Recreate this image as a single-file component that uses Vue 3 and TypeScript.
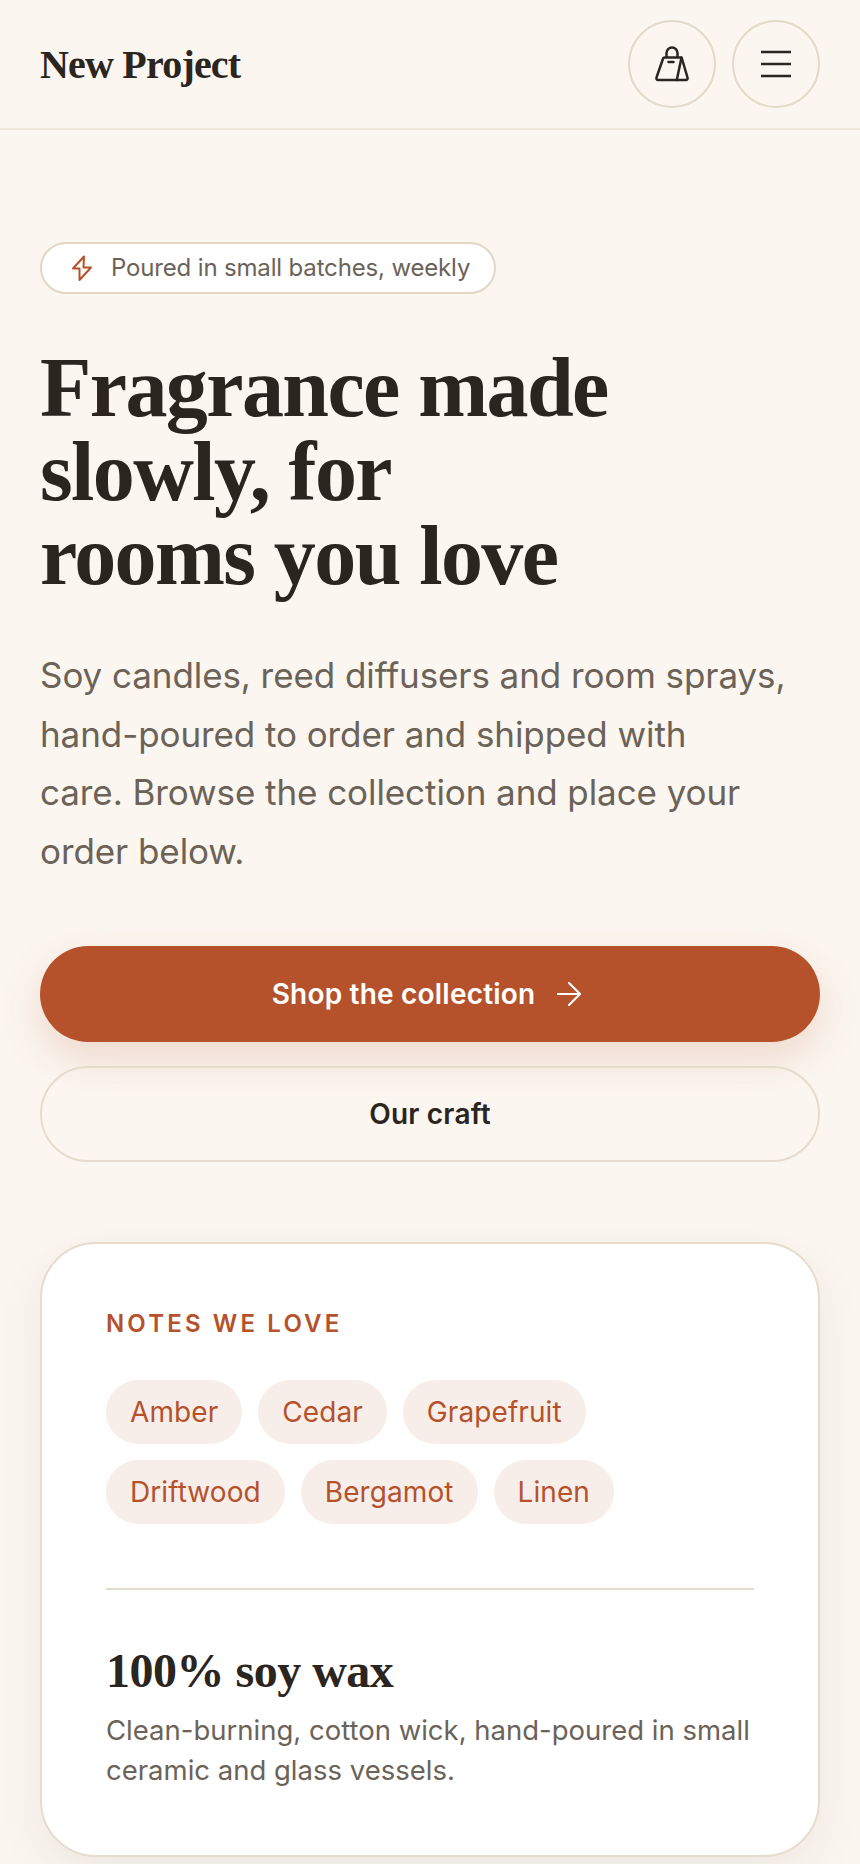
<template>
  <div class="page">
    <header class="topbar">
      <span class="brand">New Project</span>
      <div class="actions">
        <button class="round" aria-label="Bag">
          <svg width="36" height="36" viewBox="0 0 36 36" fill="none" stroke="#2b2520" stroke-width="2.500" stroke-linecap="round" stroke-linejoin="round">
            <path d="M12.500 11V7a5.500 5.500 0 0 1 11 0v4" />
            <path d="M10.500 11.500h16a1.500 1.500 0 0 1 1.400 1l5.600 19a1.800 1.800 0 0 1-1.700 2.500H4.200a1.800 1.800 0 0 1-1.700-2.500l6.600-19a1.500 1.500 0 0 1 1.400-1z" />
            <path d="M27.500 11.500 22.800 34" />
            <path d="M14.500 16h5" />
          </svg>
        </button>
        <button class="round" aria-label="Menu">
          <svg width="36" height="36" viewBox="0 0 36 36" fill="none" stroke="#2b2520" stroke-width="2.400">
            <path d="M3 6h30M3 18h30M3 30h30" />
          </svg>
        </button>
      </div>
    </header>

    <main class="hero">
      <div class="pill">
        <svg width="28" height="28" viewBox="0 0 28 28" fill="none" stroke="#b5522b" stroke-width="2" stroke-linecap="round" stroke-linejoin="round">
          <path d="M16 2.500 5 14.500h6.500L11.500 26 23 13.500h-7.500z" />
        </svg>
        <span>Poured in small batches, weekly</span>
      </div>

      <h1>Fragrance made<br />slowly, for<br />rooms you love</h1>

      <p class="lede">
        Soy candles, reed diffusers and room sprays,<br />hand-poured to order and shipped with<br />care. Browse the collection and place your<br />order below.
      </p>

      <div class="cta">
        <a class="btn primary">
          Shop the collection
          <svg width="38" height="38" viewBox="0 0 24 24" fill="none" stroke="#fff" stroke-width="1.350" stroke-linecap="round" stroke-linejoin="round">
            <path d="M5 12h14M12 5l7 7-7 7" />
          </svg>
        </a>
        <a class="btn ghost">Our craft</a>
      </div>

      <section class="card">
        <div class="eyebrow">NOTES WE LOVE</div>
        <div class="chips">
          <span v-for="n in notes" :key="n" class="chip">{{ n }}</span>
        </div>
        <hr />
        <h2>100% soy wax</h2>
        <p class="blurb">Clean-burning, cotton wick, hand-poured in small ceramic and glass vessels.</p>
      </section>
    </main>
  </div>
</template>

<script setup lang="ts">
const notes: string[] = ['Amber', 'Cedar', 'Grapefruit', 'Driftwood', 'Bergamot', 'Linen']
</script>

<style>
body {
  margin: 0;
  background: #fbf6f0;
}
</style>

<style scoped>
.page {
  height: 1864px;
  overflow: hidden;
  background: #fbf6f0;
  color: #2b2520;
  font-family: "Inter", "Noto Sans", sans-serif;
}
.topbar {
  height: 128px;
  padding: 0 40px;
  display: flex;
  align-items: center;
  justify-content: space-between;
  border-bottom: 2px solid #efe7dc;
}
.brand {
  font-family: "Liberation Serif", serif;
  font-weight: 700;
  font-size: 40px;
  letter-spacing: -0.8px;
}
.actions {
  display: flex;
  gap: 16px;
}
.round {
  width: 88px;
  height: 88px;
  padding: 0;
  border-radius: 50%;
  border: 2px solid #e3d9c9;
  background: transparent;
  display: flex;
  align-items: center;
  justify-content: center;
}
.hero {
  padding: 112px 40px 0;
}
.pill {
  display: inline-flex;
  align-items: center;
  gap: 15px;
  height: 52px;
  box-sizing: border-box;
  padding: 0 24px 0 26px;
  border: 2px solid #e0d7c7;
  border-radius: 26px;
  background: #fff;
  color: #6b6258;
  font-size: 24px;
  line-height: 46px;
  letter-spacing: -0.16px;
}
h1 {
  margin: 52px 0 0;
  font-family: "Liberation Serif", serif;
  font-weight: 700;
  font-size: 84px;
  line-height: 84px;
  letter-spacing: -1.600px;
}
.lede {
  margin: 48px 0 0;
  font-size: 35px;
  line-height: 58.500px;
  letter-spacing: -0.08px;
  color: #6b6258;
}
.cta {
  margin-top: 66px;
  display: flex;
  flex-direction: column;
  gap: 24px;
}
.btn {
  height: 96px;
  box-sizing: border-box;
  border-radius: 48px;
  display: flex;
  align-items: center;
  justify-content: center;
  gap: 15px;
  font-size: 28px;
  font-weight: 600;
  letter-spacing: 0.2px;
}
.primary {
  background: #b5522b;
  color: #fff;
  box-shadow: 0 16px 40px rgba(181, 82, 43, 0.18);
}
.ghost {
  border: 2px solid #e6dccd;
  color: #2b2520;
}
.card {
  margin-top: 80px;
  padding: 64px 64px 65px;
  background: #fff;
  border: 2px solid #e6dccd;
  border-radius: 56px;
  box-shadow: 0 16px 48px rgba(43, 37, 32, 0.07);
}
.eyebrow {
  font-size: 24px;
  font-weight: 600;
  letter-spacing: 3.150px;
  color: #b5522b;
  line-height: 32px;
}
.chips {
  margin-top: 40px;
  display: flex;
  flex-wrap: wrap;
  gap: 16px;
}
.chip {
  height: 64px;
  padding: 0 24px;
  border-radius: 32px;
  background: #f8eee9;
  color: #b5522b;
  font-size: 28px;
  line-height: 64px;
  letter-spacing: 0.08px;
}
hr {
  margin: 64px 0 0;
  border: 0;
  border-top: 2px solid #e0dacb;
}
h2 {
  margin: 53px 0 0;
  font-family: "Liberation Serif", serif;
  font-weight: 700;
  font-size: 48px;
  line-height: 56px;
  letter-spacing: -0.5px;
}
.blurb {
  margin: 11px 0 0;
  font-size: 27.500px;
  line-height: 40px;
  color: #6b6258;
}
</style>
